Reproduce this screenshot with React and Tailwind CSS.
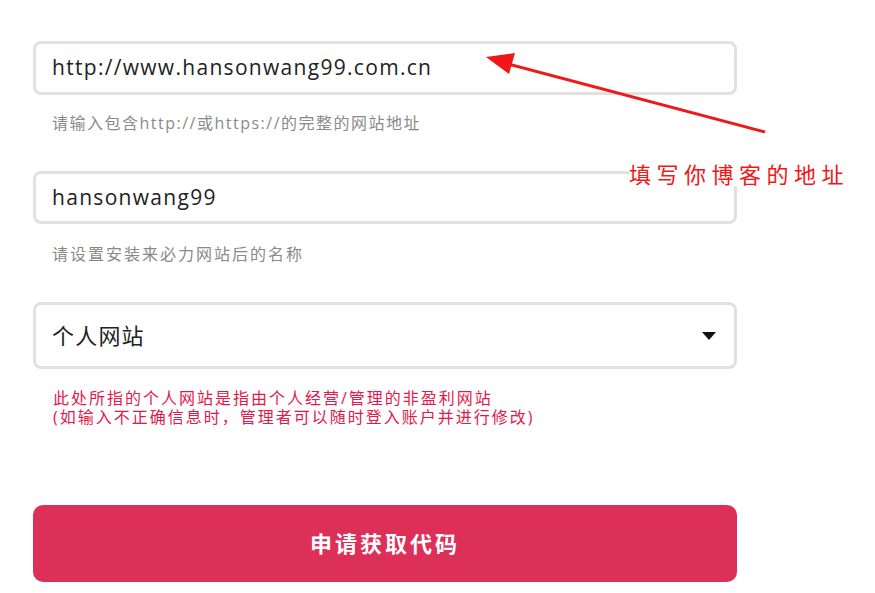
import React from "react";

const font = { fontFamily: '"Open Sans", "Noto Sans CJK SC", sans-serif' };

export default function App() {
  return (
    <div className="relative w-[875px] h-[593px] overflow-hidden bg-white" style={font}>
      <div className="flex flex-col w-[737px] pl-[33px] pt-[41px]">
        <div className="h-[54px] border-[3px] border-[#e1e1e1] rounded-[8px] flex items-center pl-[16px] text-[21px] tracking-[1.3px] text-[#222]">
          http://www.hansonwang99.com.cn
        </div>
        <div className="mt-[18px] pl-[19px] text-[16px] leading-[20px] tracking-[1.5px] text-[#8a8a8a]">
          请输入包含http://或https://的完整的网站地址
        </div>
        <div className="mt-[38px] h-[53px] border-[3px] border-[#e1e1e1] rounded-[8px] flex items-center pl-[16px] text-[21px] tracking-[1.3px] text-[#222]">
          hansonwang99
        </div>
        <div className="mt-[20px] pl-[19px] text-[16px] leading-[20px] tracking-[2px] text-[#8a8a8a]">
          请设置安装来必力网站后的名称
        </div>
        <div className="mt-[38px] h-[67px] border-[3px] border-[#e1e1e1] rounded-[8px] flex items-center justify-between pl-[16px] pr-[18px] text-[22px] tracking-[1.2px] text-[#222]">
          <span>个人网站</span>
          <svg width="14" height="8" viewBox="0 0 14 8">
            <path d="M0 0 L14 0 L7 8 Z" fill="#111" />
          </svg>
        </div>
        <div className="mt-[20px] pl-[20px] text-[16px] leading-[19px] tracking-[2px] text-[#e2194b]">
          <div>此处所指的个人网站是指由个人经营/管理的非盈利网站</div>
          <div>(如输入不正确信息时，管理者可以随时登入账户并进行修改)</div>
        </div>
        <button className="mt-[78px] h-[77px] rounded-[10px] bg-[#dc3059] text-white text-[22px] font-bold tracking-[3px] flex items-center justify-center">
          申请获取代码
        </button>
      </div>

      <svg className="absolute left-0 top-0" width="875" height="593" viewBox="0 0 875 593">
        <line x1="765" y1="132" x2="508" y2="64" stroke="#f21616" strokeWidth="3" />
        <path d="M486 57 L515 53 L509 74 Z" fill="#f21616" />
      </svg>
      <div className="absolute left-[629px] top-[162px] bg-white pr-[2px] text-[22px] leading-[24px] tracking-[5.5px] text-[#f21616]">
        填写你博客的地址
      </div>
    </div>
  );
}
